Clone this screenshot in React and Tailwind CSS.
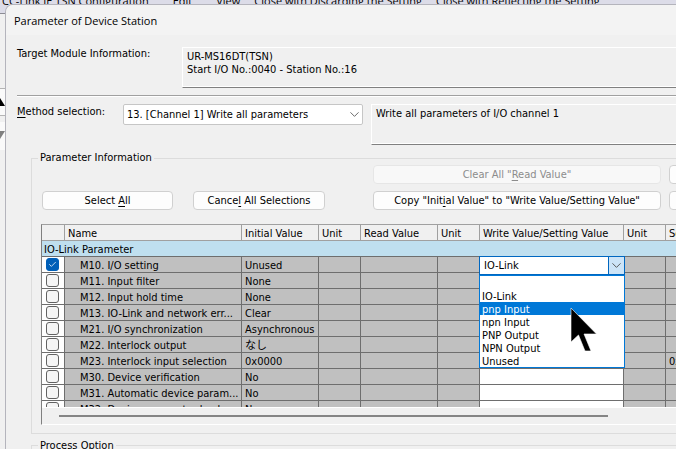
import { useState } from "react";
import { Check, ChevronDown } from "lucide-react";

const menus = ["CC-Link IE TSN Configuration", "Edit", "View"];
const menuActions = ["Close with Discarding the Setting", "Close with Reflecting the Setting"];

const columns = [
  { title: "", width: "w-[23px]" },
  { title: "Name", width: "w-[177px]" },
  { title: "Initial Value", width: "w-[77px]" },
  { title: "Unit", width: "w-[42px]" },
  { title: "Read Value", width: "w-[77px]" },
  { title: "Unit", width: "w-[42px]" },
  { title: "Write Value/Setting Value", width: "w-[144px]" },
  { title: "Unit", width: "w-[42px]" },
  { title: "Setting Range", width: "w-[120px]" },
];

const parameters = [
  { name: "M10. I/O setting", initial: "Unused", range: "" },
  { name: "M11. Input filter", initial: "None", range: "" },
  { name: "M12. Input hold time", initial: "None", range: "" },
  { name: "M13. IO-Link and network err...", initial: "Clear", range: "" },
  { name: "M21. I/O synchronization", initial: "Asynchronous", range: "" },
  { name: "M22. Interlock output", initial: "なし", range: "" },
  { name: "M23. Interlock input selection", initial: "0x0000", range: "0x0000" },
  { name: "M30. Device verification", initial: "No", range: "" },
  { name: "M31. Automatic device param...", initial: "No", range: "" },
  { name: "M32. Device parameter backup", initial: "No", range: "" },
];

const ioOptions = ["", "IO-Link", "pnp Input", "npn Input", "PNP Output", "NPN Output", "Unused"];

const PushButton = ({ className = "", disabled = false, children, ...props }) => (
  <button
    type="button"
    disabled={disabled}
    className={`h-[19px] shrink-0 rounded-[4px] border text-center whitespace-nowrap ${
      disabled ? "border-[#e6e6e6] bg-[#f8f8f8] text-[#8c8c8c]" : "border-[#d0d0d0] bg-[#fdfdfd]"
    } ${className}`}
    {...props}
  >
    <span className="block leading-[18px]">{children}</span>
  </button>
);

const InfoBox = ({ children }) => (
  <div className="h-[41px] min-w-0 flex-1 border-t border-b border-l border-t-white border-b-[#808080] border-l-white px-1 pt-[2px] leading-[13px] shadow-[inset_0_-1px_0_#ffffff]">
    {children}
  </div>
);

const IoCombo = () => {
  const [value, setValue] = useState("IO-Link");
  const [open, setOpen] = useState(true);

  return (
    <div className="absolute -top-px -left-px z-10 w-[146px]">
      <div className="relative">
        <select
          aria-label="M10. I/O setting write value"
          value={value}
          onChange={(e) => setValue(e.target.value)}
          className="block h-[19px] w-full appearance-none border border-[#0067c0] bg-white pt-px pl-1 leading-4 outline-none"
        >
          {ioOptions.map((option) => (
            <option key={option}>{option}</option>
          ))}
        </select>
        <span className="pointer-events-none absolute inset-y-0 right-0 flex w-[17px] items-center justify-center border border-[#0067c0] bg-[#cce4f7]">
          <ChevronDown size={15} strokeWidth={1.5} className="shrink-0 text-[#505050]" />
        </span>
      </div>
      {open && (
        <ul role="listbox" aria-label="I/O setting" className="border border-[#0078d7] bg-white">
          {ioOptions.map((option) => (
            <li
              key={option}
              role="option"
              aria-selected={option === "pnp Input"}
              onClick={() => {
                setValue(option);
                setOpen(false);
              }}
              className="h-[13px] pl-[2px] leading-[15px] aria-selected:bg-[#0078d7] aria-selected:text-white"
            >
              {option}
            </li>
          ))}
        </ul>
      )}
    </div>
  );
};

const ParameterTable = () => {
  const [checked, setChecked] = useState({ 0: true });
  const cell = "h-4 overflow-hidden border-r border-b border-[#6e6e6e] p-0 pt-[2px] pl-[3px] whitespace-nowrap";

  return (
    <div className="mt-[14px] ml-[9px] overflow-hidden border-t border-b border-l border-t-[#a0a0a0] border-b-white border-l-[#808080]">
      <div className="h-[183px] overflow-hidden border-b border-white">
        <table className="w-[744px] table-fixed border-separate border-spacing-0 leading-[13px]">
          <thead>
            <tr>
              {columns.map((column, index) => (
                <th
                  key={index}
                  scope="col"
                  className={`h-4 border-r border-b border-[#a0a0a0] bg-[#f0f0f0] p-0 pt-[2px] pl-[3px] text-left font-normal whitespace-nowrap ${column.width}`}
                >
                  {column.title}
                </th>
              ))}
            </tr>
          </thead>
          <tbody>
            <tr>
              <td colSpan={9} className="h-4 border-b border-[#6e6e6e] bg-[#bfdfef] p-0 pt-[2px] pl-[2px]">
                IO-Link Parameter
              </td>
            </tr>
            {parameters.map((row, index) => (
              <tr key={row.name} className="bg-[#c0c0c0]">
                <td className="h-4 border-r border-b border-[#6e6e6e] bg-white p-0">
                  <label className="relative ml-1 block size-[13px]">
                    <input
                      type="checkbox"
                      aria-label={row.name}
                      checked={Boolean(checked[index])}
                      onChange={(e) => setChecked({ ...checked, [index]: e.target.checked })}
                      className="block size-[13px] appearance-none rounded-[3px] border border-[#626262] bg-[#f5f5f5] checked:border-[#005fb8] checked:bg-[#005fb8]"
                    />
                    {checked[index] && (
                      <Check size={9} strokeWidth={2} className="pointer-events-none absolute inset-[2px] text-white" />
                    )}
                  </label>
                </td>
                <td className={cell}>
                  <span className="pl-3">{row.name}</span>
                </td>
                <td className={cell}>{row.initial}</td>
                <td className={cell} />
                <td className={cell} />
                <td className={cell} />
                {index === 0 ? (
                  <td className="relative h-4 border-r border-b border-[#6e6e6e] bg-white p-0">
                    <IoCombo />
                  </td>
                ) : (
                  <td className={`bg-white ${cell}`} />
                )}
                <td className={cell} />
                <td className={cell}>{row.range}</td>
              </tr>
            ))}
          </tbody>
        </table>
      </div>
      <div className="h-4 pt-[7px] pl-[17px]">
        <div className="h-[2px] w-[89%] bg-[#858585]" />
      </div>
    </div>
  );
};

const Pointer = () => (
  <svg className="pointer-events-none absolute top-[307px] left-[570px] z-20" width="28" height="46" viewBox="0 0 28 46">
    <path d="M1 1V35L8.500 28L15 44H21L14 27H26.500Z" fill="#000" stroke="#fff" strokeWidth="0.600" />
  </svg>
);

const DeviceStationDialog = () => (
  <section
    aria-label="Parameter of Device Station"
    className="absolute top-1 right-0 bottom-0 left-[5px] flex flex-col overflow-hidden rounded-tl-lg border-t border-l border-[#b4b4bc] bg-[#f0f0f0]"
  >
    <h1 className="h-[30px] shrink-0 bg-[#f3f3f3] pl-2 font-['Open_Sans','Noto_Sans',sans-serif] text-[11px] leading-[31px]">
      Parameter of Device Station
    </h1>
    <div className="pt-3 pl-[11px]">
      <div className="flex">
        <p className="w-[165px] shrink-0 leading-[13px]">Target Module Information:</p>
        <InfoBox>
          <p>UR-MS16DT(TSN)</p>
          <p>Start I/O No.:0040 - Station No.:16</p>
        </InfoBox>
      </div>
      <hr className="my-[7px] h-[2px] border-t border-b border-t-[#a0a0a0] border-b-white" />
      <div className="flex">
        <label htmlFor="method" className="w-[106px] shrink-0 leading-[15px]">
          <u className="underline-offset-2">M</u>ethod selection:
        </label>
        <div className="relative mr-2 h-[21px] w-60 shrink-0">
          <select
            id="method"
            className="block h-[21px] w-full appearance-none rounded-[2px] border border-[#c6c6c6] bg-white pt-px pl-[3px] leading-[18px]"
          >
            <option>13. [Channel 1] Write all parameters</option>
          </select>
          <ChevronDown size={15} strokeWidth={1.5} className="pointer-events-none absolute top-[3px] right-px text-[#606060]" />
        </div>
        <InfoBox>
          <p>Write all parameters of I/O channel 1</p>
        </InfoBox>
      </div>

      <fieldset className="mt-[6px] ml-[14px] min-w-0 border-t border-b border-l border-[#dcdcdc] pb-2">
        <legend className="ml-[6px] px-[2px] leading-[14px]">Parameter Information</legend>
        <div className="flex gap-2 pl-[341px]">
          <PushButton className="w-[288px]" disabled>
            Clear All "<u className="underline-offset-2">R</u>ead Value"
          </PushButton>
          <PushButton className="w-[288px]" aria-label="Clear all write values" />
        </div>
        <div className="mt-[7px] flex pl-[10px]">
          <PushButton className="mr-5 w-[131px]">
            Select <u className="underline-offset-2">A</u>ll
          </PushButton>
          <PushButton className="mr-12 w-[132px]">
            Cance<u className="underline-offset-2">l</u> All Selections
          </PushButton>
          <PushButton className="mr-2 w-[288px]">
            Copy "Init<u className="underline-offset-2">i</u>al Value" to "Write Value/Setting Value"
          </PushButton>
          <PushButton className="w-[288px]" aria-label="Copy read values" />
        </div>
        <ParameterTable />
      </fieldset>

      <fieldset className="mt-1 ml-[14px] min-w-0 border-t border-l border-[#dcdcdc] pb-10">
        <legend className="ml-[6px] px-[2px] leading-[15px]">Process Option</legend>
      </fieldset>
    </div>
  </section>
);

export default function App() {
  return (
    <main className="relative h-screen overflow-hidden bg-[#f0f0f0] font-['DejaVu_Sans_Condensed','Noto_Sans_CJK_JP',sans-serif] text-[11px] text-black">
      <nav className="flex h-[14px] items-end gap-[14px] overflow-hidden border-b border-[#8c8c94] bg-[#dcdce8] pb-[5px] pl-[2px] font-['Open_Sans','Noto_Sans',sans-serif] leading-[14px] whitespace-nowrap">
        <div className="flex gap-6">
          {menus.map((item) => (
            <a key={item} href="#">
              {item}
            </a>
          ))}
        </div>
        <div className="flex gap-[14px]">
          {menuActions.map((item) => (
            <a key={item} href="#">
              {item}
            </a>
          ))}
        </div>
      </nav>
      <div className="flex w-[5px] flex-col pt-[74px]">
        <div className="h-7 border-t border-b border-[#b4b4b4] bg-[#fafafa]">
          <svg width="5" height="26" viewBox="0 0 5 26">
            <path d="M0 9L5 17H0Z" fill="#000" />
          </svg>
        </div>
        <div className="mt-[6px] h-7 bg-[#fafafa]">
          <svg width="5" height="26" viewBox="0 0 5 26">
            <path d="M0 9H5L0 17Z" fill="#808080" />
          </svg>
        </div>
      </div>
      <DeviceStationDialog />
      <Pointer />
    </main>
  );
}
